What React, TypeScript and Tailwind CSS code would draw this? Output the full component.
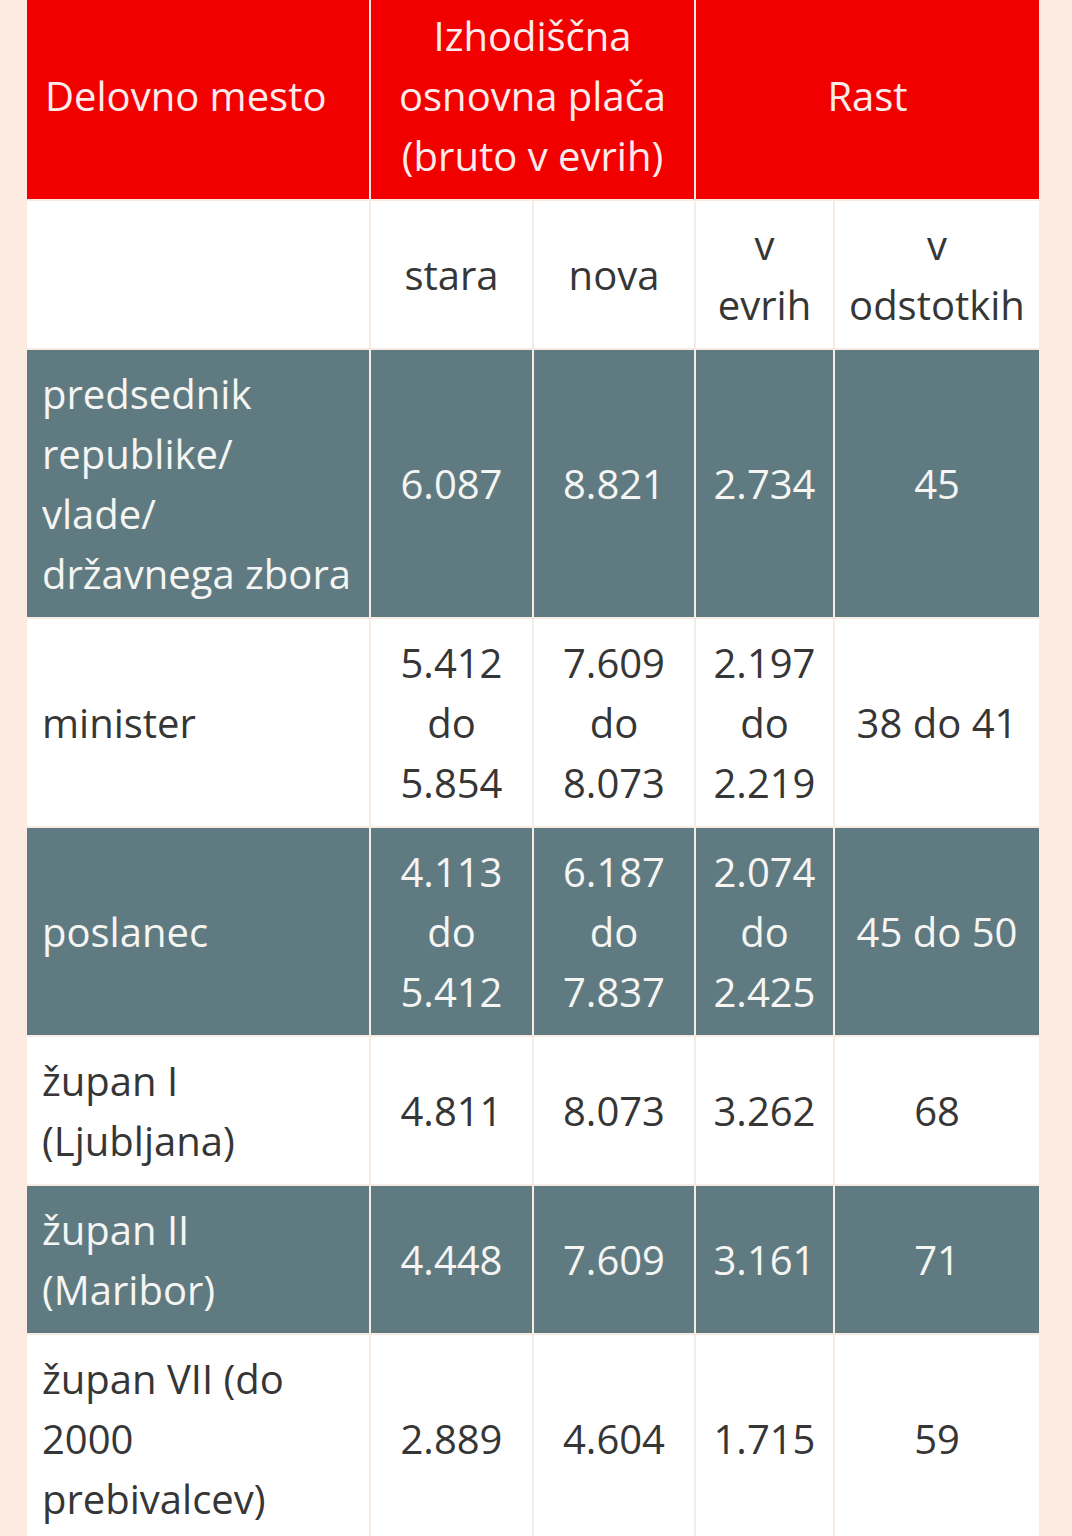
import React from 'react';

type Row = {
  label: string[];
  cells: string[][];
  dark: boolean;
};

const rows: Row[] = [
  {
    label: ['predsednik', 'republike/', 'vlade/', 'državnega zbora'],
    cells: [['6.087'], ['8.821'], ['2.734'], ['45']],
    dark: true,
  },
  {
    label: ['minister'],
    cells: [
      ['5.412', 'do', '5.854'],
      ['7.609', 'do', '8.073'],
      ['2.197', 'do', '2.219'],
      ['38 do 41'],
    ],
    dark: false,
  },
  {
    label: ['poslanec'],
    cells: [
      ['4.113', 'do', '5.412'],
      ['6.187', 'do', '7.837'],
      ['2.074', 'do', '2.425'],
      ['45 do 50'],
    ],
    dark: true,
  },
  {
    label: ['župan I', '(Ljubljana)'],
    cells: [['4.811'], ['8.073'], ['3.262'], ['68']],
    dark: false,
  },
  {
    label: ['župan II', '(Maribor)'],
    cells: [['4.448'], ['7.609'], ['3.161'], ['71']],
    dark: true,
  },
  {
    label: ['župan VII (do', '2000', 'prebivalcev)'],
    cells: [['2.889'], ['4.604'], ['1.715'], ['59']],
    dark: false,
  },
];

const Lines = ({ lines }: { lines: string[] }) => (
  <div>
    {lines.map((l, i) => (
      <div key={i} className="whitespace-nowrap">
        {l}
      </div>
    ))}
  </div>
);

export default function App() {
  return (
    <div
      className="min-h-screen bg-[#fdebe2] pl-[27px] text-[40px] leading-[60px]"
      style={{ fontFamily: '"Open Sans", "Noto Sans", sans-serif' }}
    >
      <div className="grid w-[1012px] grid-cols-[342px_161px_160px_137px_204px] gap-[2px] bg-[#f6ece4]">
        {/* Header: red row */}
        <div className="flex h-[199px] items-center bg-[#f20000] pb-[8px] pl-[18px] text-[#fdecec]">
          Delovno mesto
        </div>
        <div className="col-span-2 flex h-[199px] items-center justify-center bg-[#f20000] pb-[8px] text-center text-[#fdecec]">
          <Lines lines={['Izhodiščna', 'osnovna plača', '(bruto v evrih)']} />
        </div>
        <div className="col-span-2 flex h-[199px] items-center justify-center bg-[#f20000] pb-[8px] text-[#fdecec]">
          Rast
        </div>

        {/* Header: sub labels */}
        <div className="h-[147px] bg-white" />
        <div className="flex items-center justify-center bg-white text-[#363636]">stara</div>
        <div className="flex items-center justify-center bg-white text-[#363636]">nova</div>
        <div className="flex items-center justify-center bg-white text-center text-[#363636]">
          <Lines lines={['v', 'evrih']} />
        </div>
        <div className="flex items-center justify-center bg-white text-center text-[#363636]">
          <Lines lines={['v', 'odstotkih']} />
        </div>

        {/* Body rows */}
        {rows.map((row, ri) => {
          const cellCls = row.dark
            ? 'bg-[#5f7b81] text-[#f5f5f3]'
            : 'bg-white text-[#363636]';
          return (
            <React.Fragment key={ri}>
              <div className={`flex items-center pl-[15px] pt-[14px] pb-[13px] ${cellCls}`}>
                <Lines lines={row.label} />
              </div>
              {row.cells.map((c, ci) => (
                <div
                  key={ci}
                  className={`flex items-center justify-center pt-[14px] pb-[13px] text-center ${cellCls}`}
                >
                  <Lines lines={c} />
                </div>
              ))}
            </React.Fragment>
          );
        })}
      </div>
    </div>
  );
}
